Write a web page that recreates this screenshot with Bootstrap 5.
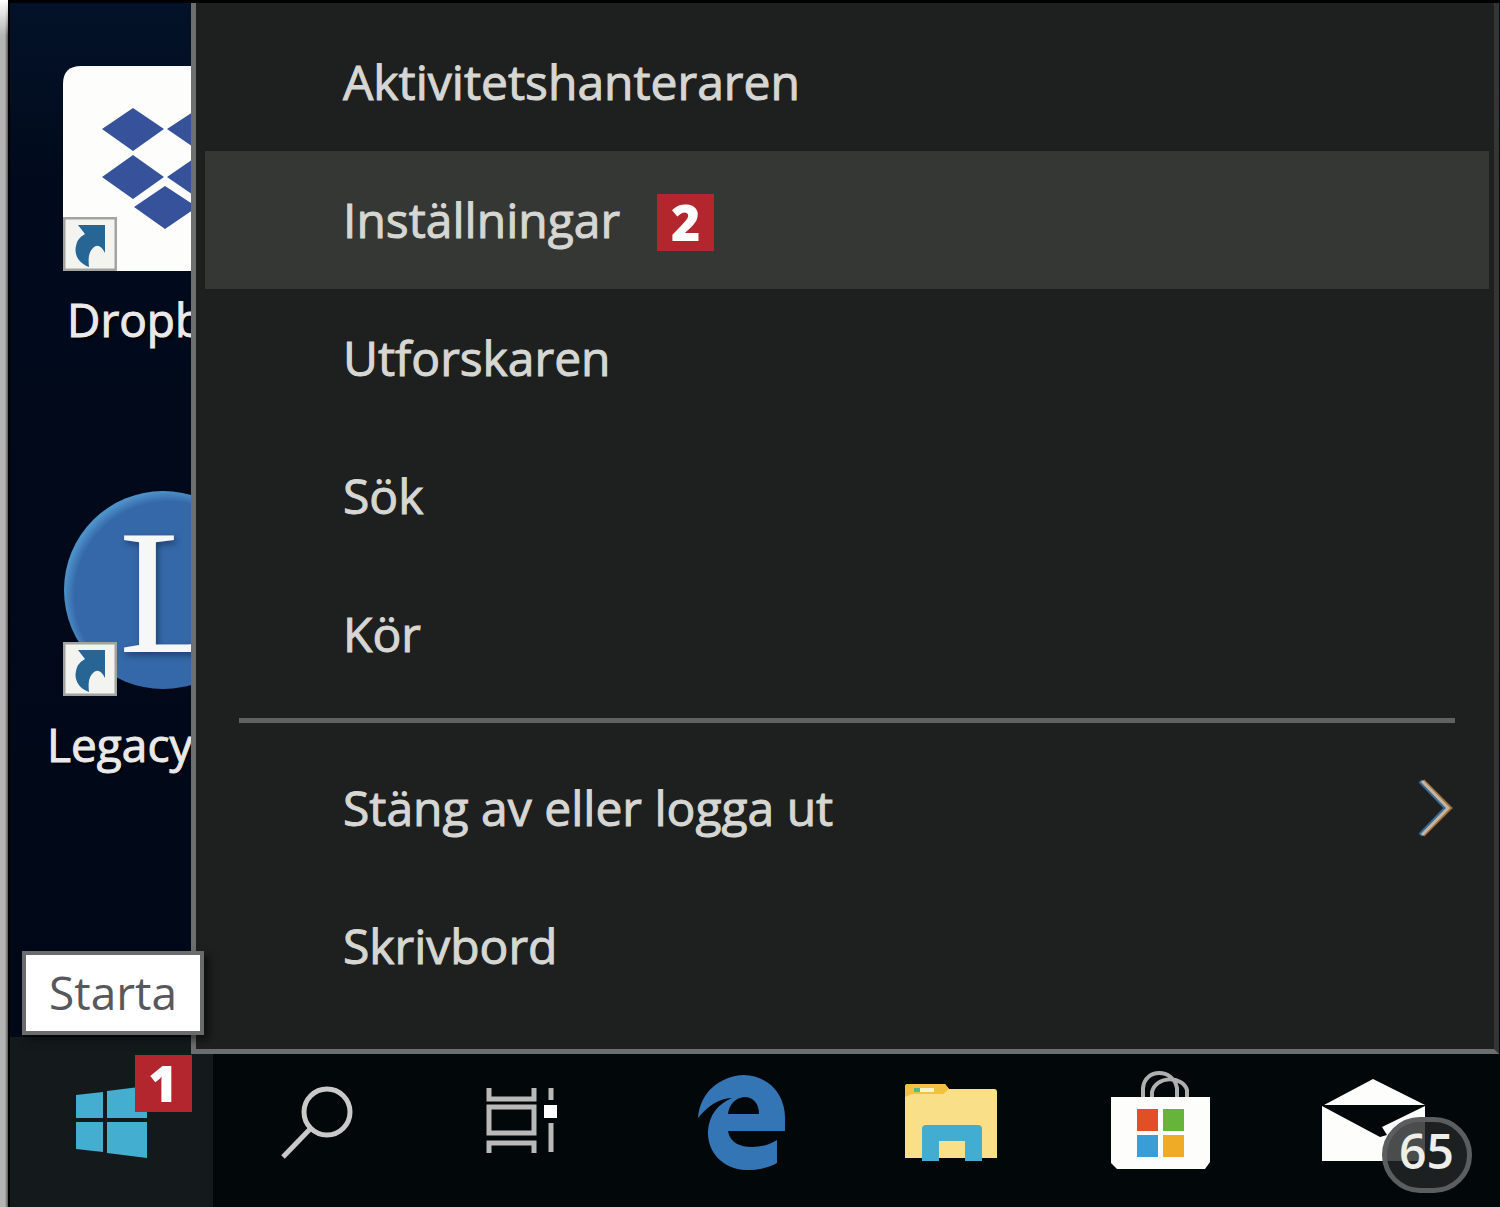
<!DOCTYPE html>
<html lang="sv">
<head>
<meta charset="utf-8">
<meta name="viewport" content="width=device-width, initial-scale=1">
<title>Startmeny</title>
<link href="https://cdn.jsdelivr.net/npm/bootstrap@5.3.0/dist/css/bootstrap.min.css" rel="stylesheet">
<style>
  body { font-family: "Open Sans", "Noto Sans", sans-serif; font-size: 46px; line-height: 60px; background: #000; }
  button { font: inherit; color: inherit; }
  .page-edge { width: 8px; background: linear-gradient(to bottom, #fff, rgba(255,255,255,0) 36px), linear-gradient(to right, #b4b4b4 60%, #5a5a5a); }
  .screen { border-top: 3px solid #000; border-left: 2px solid #000; background: linear-gradient(to bottom, #031228, #010a1c 180px, #010817); }
  .shortcuts { width: 181px; padding-top: 63px; }
  .shortcut { display: block; color: #e9e9e9; text-decoration: none; white-space: nowrap; overflow: hidden; height: 425px; padding-left: 53px; }
  .shortcut svg { display: block; margin-bottom: 18px; }
  .shortcut span { display: block; text-shadow: 2px 2px 3px #000; -webkit-text-stroke: 1px currentColor; }
  .disc-letter { filter: drop-shadow(2px 3px 3px #1c3f6c); }
  .wide-label { margin-left: -16px; }
  .narrow-label { margin-left: 4px; }
  .start-menu { border: 5px solid #6d6f6e; border-top: 0; border-right-color: #343534; background: #1d201f; margin-bottom: -17px; margin-right: 1px; padding: 10px 5px 33px 9px; z-index: 2; font-size: 48px; }
  .menu-entry { height: 138px; padding: 0 36px 0 138px; border: 0; background: none; color: #d6d6d3; text-align: left; -webkit-text-stroke: 1px currentColor; }
  .menu-entry .callout { margin-left: 37px; -webkit-text-stroke: 0; }
  .menu-entry.current { background: #353735; }
  .menu-line { border: 0; border-top: 5px solid #5f6261; opacity: 1; margin: 15px 34px 16px; }
  .callout { width: 57px; height: 57px; background: #b4262d; color: #fff; font-weight: 800; font-size: 50px; line-height: 57px; text-align: center; }
  .taskbar { height: 170px; background: #02070a; padding-right: 27px; }
  .task { flex: 206 1 0; border: 0; padding: 0; background: none; display: flex; align-items: center; justify-content: center; position: relative; }
  .task.app { flex-grow: 209; }
  .task.start { background: #141a1b; flex-grow: 203; }
  .task .callout { position: absolute; left: calc(50% + 23px); top: 18px; }
  .unread { position: absolute; left: calc(50% + 13px); top: 80px; width: 90px; height: 76px; border: 5px solid #5b5e5e; border-radius: 38px; background: rgba(35,38,38,.82); color: #eeeeea; font-weight: 600; font-size: 48px; line-height: 58px; text-align: center; }
  .tip { position: absolute; left: 22px; bottom: 172px; width: 182px; height: 84px; border: 4px solid #6b6b6b; background: #fff; color: #57575c; line-height: 74px; text-align: center; z-index: 3; box-shadow: 5px 5px 8px rgba(0,0,0,.5); }
</style>
<script src="https://cdn.jsdelivr.net/npm/bootstrap@5.3.0/dist/js/bootstrap.bundle.min.js"></script>
</head>
<body>
<svg width="0" height="0" class="position-absolute" aria-hidden="true">
  <symbol id="arrow" viewBox="0 0 54 54">
    <rect x="1" y="1" width="52" height="52" fill="#f3f3f0" stroke="#a3a3a0" stroke-width="3"/>
    <path d="M15 8H42V36C38 28 34 27 30 31C26 35 25 40 26 50C15 46 11 37 13 29C14 23 17 20 22 17Z" fill="#266594"/>
  </symbol>
</svg>
<div class="d-flex min-vh-100 position-relative">
  <div class="page-edge flex-shrink-0"></div>
  <div class="screen d-flex flex-column flex-grow-1">
    <main class="d-flex flex-grow-1">
      <div class="shortcuts flex-shrink-0">
        <a class="shortcut" href="#">
          <svg width="128" height="205" viewBox="63 66 128 205">
            <path d="M63 271V84Q63 66 81 66H191V271Z" fill="#fdfdfb"/>
            <path d="M133 108L164 129L133 151L102 129ZM199 108L230 129L199 151L167 129ZM133 155L164 177L133 199L102 177ZM199 155L230 177L199 199L167 177ZM165 186L197 207L165 229L134 207Z" fill="#36529a"/>
            <use href="#arrow" x="63" y="217" width="54" height="54"/>
          </svg>
          <span class="narrow-label">Dropb</span>
        </a>
        <a class="shortcut" href="#">
          <svg width="128" height="205" viewBox="63 492 128 205">
            <defs><radialGradient id="disc" cx=".53" cy=".53" r=".53"><stop offset=".9" stop-color="#3568a8"/><stop offset="1" stop-color="#4d91c8"/></radialGradient></defs>
            <circle cx="163" cy="591" r="99" fill="url(#disc)"/>
            <text class="disc-letter" x="119" y="653" font-family="Liberation Serif, serif" font-size="178" fill="#f6f8f8">L</text>
            <use href="#arrow" x="63" y="643" width="54" height="54"/>
          </svg>
          <span class="wide-label">Legacy</span>
        </a>
      </div>
      <nav class="start-menu d-flex flex-column flex-grow-1 position-relative">
        <button class="menu-entry" type="button">Aktivitetshanteraren</button>
        <button class="menu-entry current d-flex align-items-center" type="button">Inställningar<span class="callout mt-1">2</span></button>
        <button class="menu-entry" type="button">Utforskaren</button>
        <button class="menu-entry" type="button">Sök</button>
        <button class="menu-entry" type="button">Kör</button>
        <hr class="menu-line">
        <button class="menu-entry d-flex align-items-center justify-content-between" type="button">Stäng av eller logga ut
          <svg width="36" height="62" viewBox="0 0 36 62" fill="none" stroke-width="4">
            <path d="M3 4L29 31L3 58" stroke="#37689a"/><path d="M6 4L33 31L6 58" stroke="#a56e3d"/><path d="M5 4L31 31L5 58" stroke="#c3b6a0" stroke-width="3"/>
          </svg>
        </button>
        <button class="menu-entry" type="button">Skrivbord</button>
      </nav>
    </main>
    <footer class="taskbar d-flex">
      <button class="task start" type="button" aria-label="Starta">
        <svg width="120" height="120" viewBox="51 1062 120 120" fill="#43aed0"><path d="M75 1095L102 1092V1118H75ZM106 1091L146 1086V1118H106ZM75 1122H102V1152L75 1149ZM106 1122H146V1158L106 1153Z"/></svg>
        <span class="callout">1</span>
      </button>
      <button class="task" type="button" aria-label="Sök">
        <svg width="120" height="120" viewBox="256 1062 120 120" fill="none" stroke="#c9c9c9" stroke-width="5"><circle cx="327" cy="1112" r="23"/><path d="M311 1128L283 1157"/></svg>
      </button>
      <button class="task" type="button" aria-label="Aktivitetsvy">
        <svg width="120" height="120" viewBox="462 1062 120 120" fill="none" stroke="#b9b9b7" stroke-width="5"><path d="M489 1088V1099H534V1088M489 1153V1143H534V1153"/><path d="M489 1107H534V1133H489Z"/><path d="M551 1088V1100M551 1123V1152"/><path d="M544 1105H557V1118H544Z" fill="#fff" stroke="none"/></svg>
      </button>
      <button class="task app ms-2 ps-1" type="button" aria-label="Edge">
        <svg width="120" height="120" viewBox="682 1062 120 120" fill="#3375b5"><path fill-rule="evenodd" d="M698 1118C700 1092 720 1076 744 1075C770 1076 786 1096 785 1120V1131H728C730 1143 740 1147 752 1147C762 1147 771 1144 777 1140V1163C769 1168 758 1170 746 1170C722 1169 707 1151 708 1131C709 1115 718 1104 732 1098C718 1098 706 1108 698 1118ZM728 1114H759C759 1103 753 1097 744 1097C735 1098 729 1105 728 1114Z"/></svg>
      </button>
      <button class="task app" type="button" aria-label="Utforskaren">
        <svg width="120" height="120" viewBox="891 1062 120 120"><path d="M905 1158V1087Q905 1084 908 1084H945L949 1089H994Q997 1089 997 1092V1158Z" fill="#f8df88"/><path d="M905 1097V1087Q905 1084 908 1084H945L949 1089L943 1094H912Z" fill="#f2c23f"/><path d="M914 1088H934V1092H914Z" fill="#f9f1c9"/><path d="M914 1088H920V1092H914Z" fill="#58b596"/><path d="M922 1161V1129Q922 1125 926 1125H978Q982 1125 982 1129V1161H965V1141H939V1161Z" fill="#42add1"/></svg>
      </button>
      <button class="task app" type="button" aria-label="Store">
        <svg width="120" height="120" viewBox="1100 1062 120 120"><path d="M1143 1099V1088C1145 1068 1173 1068 1177 1088V1099M1152 1099V1092C1156 1075 1183 1076 1187 1090V1099" fill="none" stroke="#aeb0af" stroke-width="4"/><path d="M1111 1097H1210V1162L1205 1169H1117L1111 1163Z" fill="#fdfdfc"/><path d="M1137 1109H1158V1131H1137Z" fill="#e24f26"/><path d="M1163 1109H1184V1131H1163Z" fill="#67b43b"/><path d="M1137 1135H1158V1157H1137Z" fill="#3b9dd5"/><path d="M1163 1135H1184V1157H1163Z" fill="#efab25"/></svg>
      </button>
      <button class="task app" type="button" aria-label="E-post">
        <svg width="120" height="120" viewBox="1309 1062 120 120" fill="#fdfdfb"><path d="M1324 1105L1373 1079L1425 1105ZM1322 1106L1380 1137L1387 1135L1382 1127L1425 1106V1161H1322Z"/></svg>
        <span class="unread">65</span>
      </button>
    </footer>
  </div>
  <div class="tip" role="tooltip">Starta</div>
</div>
</body>
</html>
